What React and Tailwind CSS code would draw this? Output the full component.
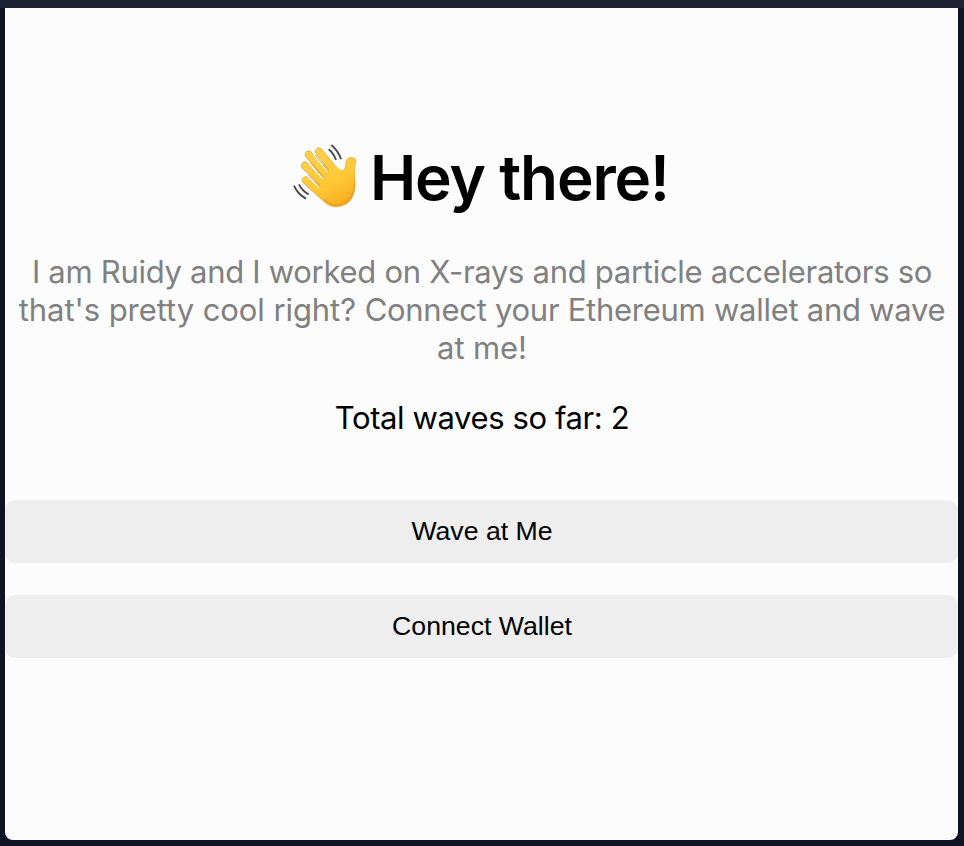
function WavingHand() {
  return (
    <svg className="h-[85px] w-[90px] shrink-0" viewBox="0 0 270 255" fill="none" aria-label="Waving hand">
      <defs>
        <linearGradient id="skin" x1="90" y1="40" x2="180" y2="215" gradientUnits="userSpaceOnUse">
          <stop offset="0" stopColor="#ffd04c" />
          <stop offset="0.6" stopColor="#ffc938" />
          <stop offset="1" stopColor="#f5ac20" />
        </linearGradient>
      </defs>
      <path
        d="M112 90L160 88C171 102 181 110 189 107C195 104 197 94 198 83C199 71 207 67 217 68C227 69 230 75 227 83C222 95 223 108 224 122C226 145 226 165 219 182C211 203 191 215 167 215C151 215 139 207 127 195L104 173Z"
        fill="url(#skin)"
        stroke="#e9a024"
        strokeWidth="2"
        strokeLinejoin="round"
      />
      <path d="M78 136L116 171M75 92L132 147M86 59L145 127M117 50L168 112" stroke="#e39a22" strokeWidth="23" strokeLinecap="round" />
      <path d="M78 136L116 171M75 92L132 147M86 59L145 127M117 50L168 112" stroke="url(#skin)" strokeWidth="20" strokeLinecap="round" />
      <path d="M130 108L166 92L192 112L215 130L211 178L180 203L140 199L112 171L125 145Z" fill="url(#skin)" />
      <path d="M88 86L128 130M102 60L142 108M82 123L117 156" stroke="#fcfcfc" strokeWidth="4.5" strokeLinecap="round" />
      <path d="M92 84L132 129M106 60L145 108M86 121L120 155" stroke="#d9881a" strokeWidth="2.5" strokeLinecap="round" />
      <path d="M223 146C222 177 207 206 171 210C157 211 146 205 134 195" stroke="#e98f18" strokeWidth="4" strokeLinecap="round" opacity="0.55" />
      <path d="M154 30C167 41 177 54 183 73M146 43C156 51 163 61 168 75M42 152C49 169 61 182 78 191M57 148C63 161 73 171 86 178" stroke="#46474b" strokeWidth="5.5" />
    </svg>
  );
}

function WaveButton({ children }) {
  return (
    <button className="h-[63px] w-full rounded-[10px] bg-[#eeeeee] pb-px pl-px text-center font-['Liberation_Sans',Arial,sans-serif] text-[26.67px] leading-[62px] text-black">
      {children}
    </button>
  );
}

export default function App() {
  return (
    <div className="h-[846px] w-[964px] overflow-hidden bg-[#0e1424] font-[Inter,sans-serif]">
      <div className="h-2 bg-[#1f2435]" />
      <main className="mr-1.5 ml-[5px] flex h-[832px] flex-col rounded-b-[8px] bg-[#fcfcfc] pt-[127px]">
        <h1 className="flex h-[85px] items-center pl-[275px] text-[62px] leading-[85px] font-semibold whitespace-nowrap text-black">
          <WavingHand />
          <span className="tracking-[-1.15px]">Hey there!</span>
        </h1>
        <div className="mt-[33px] flex flex-col items-center pl-px text-[31px] leading-[38px] whitespace-nowrap text-[#808080]">
          <span className="tracking-[-0.29px]">I am Ruidy and I worked on X-rays and particle accelerators so</span>
          <span className="tracking-[-0.27px]">
            <span className="tracking-[-0.07px]">that's pretty cool right? </span>
            Connect your Ethereum wallet and wave
          </span>
          <span className="tracking-[-0.1px]">at me!</span>
        </div>
        <p className="mt-8 pl-px text-center text-[31px] leading-[38px] tracking-[-0.4px] text-black">Total waves so far: 2</p>
        <div className="mt-[63px] flex flex-col gap-8">
          <WaveButton>Wave at Me</WaveButton>
          <WaveButton>Connect Wallet</WaveButton>
        </div>
      </main>
    </div>
  );
}
